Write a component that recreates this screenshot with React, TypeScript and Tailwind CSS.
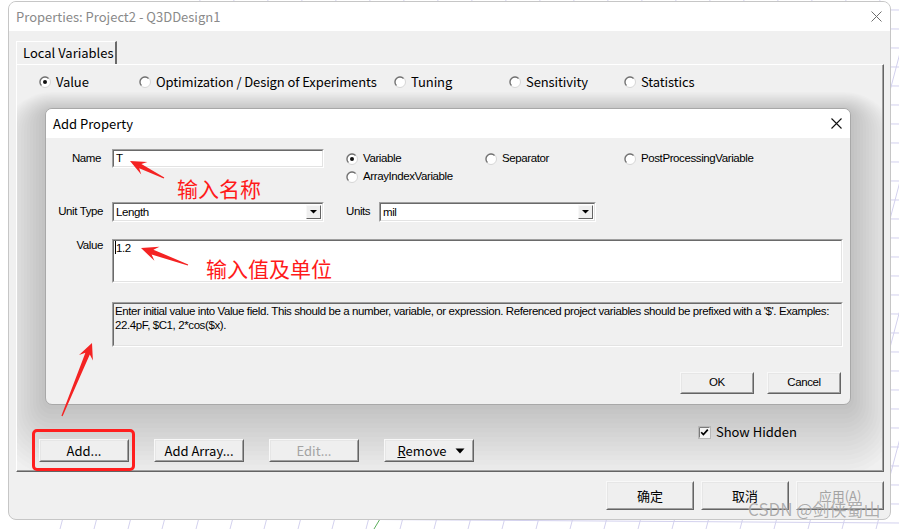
import React from "react";

const UI: React.CSSProperties = { fontFamily: '"Noto Sans CJK SC", "Noto Sans", sans-serif' };
const NARROW: React.CSSProperties = {
  fontFamily: '"Liberation Sans", Arial, sans-serif',
};

function Radio({ checked = false }: { checked?: boolean }) {
  return (
    <svg width="12" height="12" viewBox="0 0 12 12" className="shrink-0">
      <circle cx="6" cy="6" r="5.5" fill="#fff" stroke="#d6d6d6" />
      <path d="M2.46 9.54 A5 5 0 0 1 9.54 2.46" fill="none" stroke="#707070" strokeWidth="1.3" />
      {checked && <circle cx="6" cy="6" r="2" fill="#111" />}
    </svg>
  );
}

function Check() {
  return (
    <svg width="13" height="13" viewBox="0 0 13 13" className="shrink-0">
      <rect x="0.5" y="0.5" width="12" height="12" fill="#f4f4f4" stroke="#b8b8b8" />
      <path d="M1.5 11.5 V1.5 H11.5" stroke="#7a7a7a" fill="none" />
      <path d="M3.2 6.2 L5.4 8.6 L9.8 3.6" stroke="#000" strokeWidth="1.7" fill="none" />
    </svg>
  );
}

function Btn({
  className = "",
  children,
}: {
  className?: string;
  children: React.ReactNode;
}) {
  return (
    <div
      className={
        "relative shrink-0 border border-t-[#f8f8f8] border-l-[#f8f8f8] border-b-[#646464] border-r-[#646464] bg-[#efefef] " +
        className
      }
    >
      <div className="relative flex h-full w-full items-center justify-center border border-t-[#e6e6e6] border-l-[#e6e6e6] border-b-[#a0a0a0] border-r-[#a0a0a0]">
        {children}
      </div>
    </div>
  );
}

function Sunken({
  className = "",
  inner = "",
  children,
}: {
  className?: string;
  inner?: string;
  children?: React.ReactNode;
}) {
  return (
    <div
      className={
        "shrink-0 border border-t-[#a0a0a0] border-l-[#a0a0a0] border-b-[#ffffff] border-r-[#ffffff] " +
        className
      }
    >
      <div
        className={
          "relative h-full w-full border border-t-[#6a6a6a] border-l-[#6a6a6a] border-b-[#e3e3e3] border-r-[#e3e3e3] " +
          inner
        }
      >
        {children}
      </div>
    </div>
  );
}

function DropBtn() {
  return (
    <div className="absolute right-[1px] top-[1px] h-[14px] w-[15px] border border-t-[#f8f8f8] border-l-[#f8f8f8] border-b-[#646464] border-r-[#646464] bg-[#efefef]">
      <svg width="13" height="12" viewBox="0 0 13 12" className="block">
        <path d="M3 4 H10 L6.5 7.5 Z" fill="#000" />
      </svg>
    </div>
  );
}

function arrow(x1: number, y1: number, x2: number, y2: number, headLen: number, headW: number, neckW: number, tailW: number) {
  const dx = x2 - x1;
  const dy = y2 - y1;
  const L = Math.hypot(dx, dy);
  const ux = dx / L;
  const uy = dy / L;
  const px = -uy;
  const py = ux;
  const bx = x2 - ux * headLen;
  const by = y2 - uy * headLen;
  const nx = x2 - ux * headLen * 0.72;
  const ny = y2 - uy * headLen * 0.72;
  const pts = [
    [x1 + px * tailW, y1 + py * tailW],
    [nx + px * neckW, ny + py * neckW],
    [bx + px * headW, by + py * headW],
    [x2, y2],
    [bx - px * headW, by - py * headW],
    [nx - px * neckW, ny - py * neckW],
    [x1 - px * tailW, y1 - py * tailW],
  ];
  return pts.map((p) => p[0].toFixed(1) + "," + p[1].toFixed(1)).join(" ");
}

function Background() {
  const lines: React.ReactNode[] = [];
  for (let i = 0; i < 30; i++) {
    const y = 6 + i * 19;
    lines.push(<line key={"h" + i} x1="300" y1={y} x2="899" y2={y + 4} stroke="#d3d1ee" strokeWidth="1" />);
  }
  for (let i = 0; i < 30; i++) {
    const x = 60 + i * 34;
    lines.push(<line key={"d" + i} x1={x} y1="529" x2={x + 140} y2="0" stroke="#d3d1ee" strokeWidth="1" />);
  }
  return (
    <svg className="absolute inset-0" width="899" height="529">
      <rect width="899" height="529" fill="#ffffff" />
      {lines}
      <line x1="374" y1="529" x2="380" y2="519" stroke="#5cae5c" strokeWidth="1" />
    </svg>
  );
}

/* Soft shadow of the dialog, drawn as stacked translucent rounded rects (in page coordinates). */
function DialogShadow() {
  const layers: React.ReactNode[] = [];
  for (let i = 0; i < 16; i++) {
    layers.push(
      <rect
        key={i}
        x={45 - 3 * i}
        y={110 - 1.2 * i}
        width={806 + 6 * i}
        height={295 + 1.2 * i + 4.6 * i}
        rx={7 + 3 * i}
        fill="#000"
        opacity="0.013"
      />
    );
  }
  return (
    <svg className="pointer-events-none absolute left-[-17px] top-[-65px]" width="899" height="529">
      {layers}
    </svg>
  );
}

const NT = "text-[11.5px] tracking-[-0.4px]";

export default function App() {
  return (
    <div className="relative h-[529px] w-[899px] overflow-hidden bg-white" style={UI}>
      <Background />

      {/* Outer Properties window */}
      <div className="absolute left-[8px] top-[1px] flex h-[519px] w-[883px] flex-col overflow-hidden rounded-[8px] border border-[#c6c6c6] bg-[#f0f0f0]">
        <div className="flex h-[29px] shrink-0 items-center justify-between bg-white pl-[7px] pr-[8px]">
          <span className="text-[13px] text-[#8a8a8a]">Properties: Project2 - Q3DDesign1</span>
          <svg width="11" height="11" viewBox="0 0 11 11">
            <path d="M0.5 0.5 L10.5 10.5 M10.5 0.5 L0.5 10.5" stroke="#6e6e6e" strokeWidth="1" />
          </svg>
        </div>

        <div className="flex flex-1 flex-col pl-[7px] pr-[6px]">
          {/* tab */}
          <div className="mt-[10px] flex">
            <div className="flex h-[23px] w-[101px] items-center border-l border-t border-r-2 border-l-white border-t-white border-r-[#6a6a6a] pl-[6px] text-[13px] text-black">
              Local Variables
            </div>
          </div>

          {/* panel */}
          <div className="flex h-[408px] flex-col border border-t-white border-l-white border-b-[#646464] border-r-[#646464]">
            <div className="relative flex h-full flex-col overflow-hidden border-b border-r border-b-[#a0a0a0] border-r-[#a0a0a0]">
              <DialogShadow />
              <div className="relative mt-[9px] flex h-[16px] items-center pl-[22px] text-[13px] tracking-[-0.1px] text-black">
                <div className="flex w-[100px] items-center gap-[5px]">
                  <Radio checked />
                  <span>Value</span>
                </div>
                <div className="flex w-[255px] items-center gap-[5px]">
                  <Radio />
                  <span>Optimization / Design of Experiments</span>
                </div>
                <div className="flex w-[115px] items-center gap-[5px]">
                  <Radio />
                  <span>Tuning</span>
                </div>
                <div className="flex w-[115px] items-center gap-[5px]">
                  <Radio />
                  <span>Sensitivity</span>
                </div>
                <div className="flex items-center gap-[5px]">
                  <Radio />
                  <span>Statistics</span>
                </div>
              </div>

              <div className="relative mt-auto mb-[8px] flex items-start pl-[22px] pr-[85px] text-[13px] text-black">
                <div className="mt-[14px] flex gap-[25px]">
                  <Btn className="h-[23px] w-[90px]">Add...</Btn>
                  <Btn className="h-[23px] w-[90px]">Add Array...</Btn>
                  <Btn className="h-[23px] w-[90px]">
                    <span className="text-[#a3a3a3]">Edit...</span>
                  </Btn>
                  <Btn className="h-[23px] w-[90px]">
                    <span className="-ml-[14px]">
                      <span className="underline">R</span>emove
                    </span>
                    <svg width="10" height="6" viewBox="0 0 10 6" className="absolute right-[7px] top-[7px]">
                      <path d="M0.5 0.5 H9.5 L5 5.5 Z" fill="#000" />
                    </svg>
                  </Btn>
                </div>
                <div className="ml-auto flex items-center gap-[5px]">
                  <Check />
                  <span className="leading-[14px]">Show Hidden</span>
                </div>
              </div>
            </div>
          </div>

          {/* bottom buttons */}
          <div className="mt-[9px] flex justify-end gap-[7px] text-[13px]">
            <Btn className="h-[29px] w-[88px]">确定</Btn>
            <Btn className="h-[29px] w-[88px]">取消</Btn>
            <Btn className="h-[29px] w-[88px]">
              <span className="text-[#a3a3a3]">应用(A)</span>
            </Btn>
          </div>
        </div>
      </div>

      {/* Add Property dialog */}
      <div className="absolute left-[45px] top-[108px] flex h-[297px] w-[806px] flex-col overflow-hidden rounded-[7px] border border-[#a8a8a8] bg-[#f0f0f0]">
        <div className="flex h-[29px] shrink-0 items-center justify-between bg-white pl-[7px] pr-[8px]">
          <span className="text-[13px] text-black">Add Property</span>
          <svg width="11" height="11" viewBox="0 0 11 11">
            <path d="M0.5 0.5 L10.5 10.5 M10.5 0.5 L0.5 10.5" stroke="#111" strokeWidth="1.1" />
          </svg>
        </div>

        <div className={"flex flex-col text-black " + NT} style={NARROW}>
          {/* row 1 */}
          <div className="mt-[11px] flex h-[36px] items-start">
            <div className="w-[55px] text-right leading-[19px]">Name</div>
            <Sunken className="ml-[11px] h-[19px] w-[212px]" inner="bg-white pl-[2px] leading-[15px]">
              T
            </Sunken>
            <div className="ml-[22px] mt-[1px] grid grid-cols-[139px_139px_auto] grid-rows-[18px_18px]">
              <div className="flex items-center gap-[5px]">
                <Radio checked />
                <span>Variable</span>
              </div>
              <div className="flex items-center gap-[5px]">
                <Radio />
                <span>Separator</span>
              </div>
              <div className="flex items-center gap-[5px]">
                <Radio />
                <span>PostProcessingVariable</span>
              </div>
              <div className="flex items-center gap-[5px]">
                <Radio />
                <span>ArrayIndexVariable</span>
              </div>
            </div>
          </div>

          {/* row 2 */}
          <div className="mt-[17px] flex h-[20px] items-center">
            <div className="w-[57px] text-right">Unit Type</div>
            <Sunken className="ml-[9px] h-[20px] w-[212px]" inner="bg-white pl-[2px] leading-[16px]">
              Length
              <DropBtn />
            </Sunken>
            <div className="ml-[22px] w-[33px]">Units</div>
            <Sunken className="h-[20px] w-[217px]" inner="bg-white pl-[2px] leading-[16px]">
              mil
              <DropBtn />
            </Sunken>
          </div>

          {/* row 3 */}
          <div className="mt-[17px] flex h-[44px] items-start">
            <div className="w-[57px] text-right leading-[13px]">Value</div>
            <Sunken className="ml-[9px] h-[44px] w-[731px]" inner="bg-white pl-[1px] leading-[14px]">
              <span className="inline-block h-[13px] border-l border-black align-[-2px]"></span>1.2
            </Sunken>
          </div>

          {/* row 4 */}
          <div className="mt-[19px] flex">
            <Sunken className="ml-[66px] h-[45px] w-[731px]" inner="bg-[#f0f0f0] pl-[1px] leading-[14px]">
              Enter initial value into Value field. This should be a number, variable, or expression. Referenced
              project variables should be prefixed with a '$'. Examples: 22.4pF, $C1, 2*cos($x).
            </Sunken>
          </div>

          {/* row 5 */}
          <div className="mt-[25px] flex justify-end gap-[13px] pr-[9px]">
            <Btn className="h-[22px] w-[74px]">OK</Btn>
            <Btn className="h-[22px] w-[74px]">Cancel</Btn>
          </div>
        </div>
      </div>

      {/* annotations */}
      <svg className="pointer-events-none absolute inset-0" width="899" height="529">
        <polygon points={arrow(164, 178, 130, 161, 16, 7, 2.4, 0.6)} fill="#f42323" />
        <polygon points={arrow(188, 265, 141, 248, 17, 7.5, 2.6, 0.6)} fill="#f42323" />
        <polygon points={arrow(62, 416, 92, 343, 16, 7.5, 2.4, 0.6)} fill="#f42323" />
        <rect x="33.5" y="430.5" width="100" height="39" rx="3.5" fill="none" stroke="#ff1e1e" strokeWidth="3" />
      </svg>
      <div className="pointer-events-none absolute left-[177px] top-[178px] text-[21px] leading-none text-[#ff1a1a]">
        输入名称
      </div>
      <div className="pointer-events-none absolute left-[206px] top-[258px] text-[21px] leading-none text-[#ff1a1a]">
        输入值及单位
      </div>
      <div className="pointer-events-none absolute left-[748px] top-[500px] text-[17px] leading-none text-[rgba(120,120,120,0.6)] [text-shadow:0_0_1px_rgba(255,255,255,0.8)]">
        CSDN @剑侠蜀山
      </div>
    </div>
  );
}
